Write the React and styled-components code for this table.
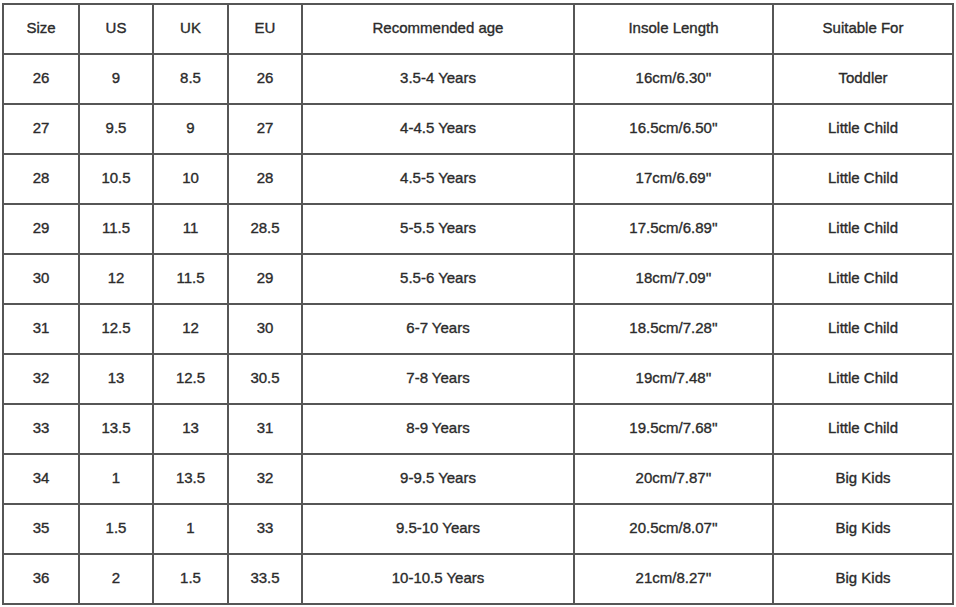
import React from "react";
import styled, { createGlobalStyle } from "styled-components";

const GlobalStyle = createGlobalStyle`
  html, body {
    margin: 0;
    padding: 0;
    background: #fff;
  }
`;

const Page = styled.div`
  padding: 3px 0 0 2px;
  width: 956px;
  height: 607px;
  box-sizing: border-box;
  background: #fff;
  font-family: "Liberation Sans", Arial, sans-serif;
`;

const Table = styled.table`
  border-collapse: collapse;
  table-layout: fixed;
  width: 950px;
  color: #2b2b2b;
  font-size: 15px;
  -webkit-text-stroke: 0.35px #2b2b2b;
`;

const Cell = styled.td`
  border: 2px solid #565656;
  height: 45px;
  padding: 0 0 3px;
  text-align: center;
  vertical-align: middle;
  white-space: nowrap;
`;

const HeadCell = styled(Cell).attrs({ as: "th" })`
  font-weight: normal;
`;

const columns = [
  { label: "Size", width: 76 },
  { label: "US", width: 74 },
  { label: "UK", width: 75 },
  { label: "EU", width: 74 },
  { label: "Recommended age", width: 272 },
  { label: "Insole Length", width: 199 },
  { label: "Suitable For", width: 180 },
];

const rows = [
  ["26", "9", "8.5", "26", "3.5-4 Years", "16cm/6.30''", "Toddler"],
  ["27", "9.5", "9", "27", "4-4.5 Years", "16.5cm/6.50''", "Little Child"],
  ["28", "10.5", "10", "28", "4.5-5 Years", "17cm/6.69''", "Little Child"],
  ["29", "11.5", "11", "28.5", "5-5.5 Years", "17.5cm/6.89''", "Little Child"],
  ["30", "12", "11.5", "29", "5.5-6 Years", "18cm/7.09''", "Little Child"],
  ["31", "12.5", "12", "30", "6-7 Years", "18.5cm/7.28''", "Little Child"],
  ["32", "13", "12.5", "30.5", "7-8 Years", "19cm/7.48''", "Little Child"],
  ["33", "13.5", "13", "31", "8-9 Years", "19.5cm/7.68''", "Little Child"],
  ["34", "1", "13.5", "32", "9-9.5 Years", "20cm/7.87''", "Big Kids"],
  ["35", "1.5", "1", "33", "9.5-10 Years", "20.5cm/8.07''", "Big Kids"],
  ["36", "2", "1.5", "33.5", "10-10.5 Years", "21cm/8.27''", "Big Kids"],
];

export default function App() {
  return (
    <Page>
      <GlobalStyle />
      <Table>
        <colgroup>
          {columns.map((c) => (
            <col key={c.label} style={{ width: c.width }} />
          ))}
        </colgroup>
        <thead>
          <tr>
            {columns.map((c) => (
              <HeadCell key={c.label}>{c.label}</HeadCell>
            ))}
          </tr>
        </thead>
        <tbody>
          {rows.map((r) => (
            <tr key={r[0]}>
              {r.map((v, i) => (
                <Cell key={i}>{v}</Cell>
              ))}
            </tr>
          ))}
        </tbody>
      </Table>
    </Page>
  );
}
